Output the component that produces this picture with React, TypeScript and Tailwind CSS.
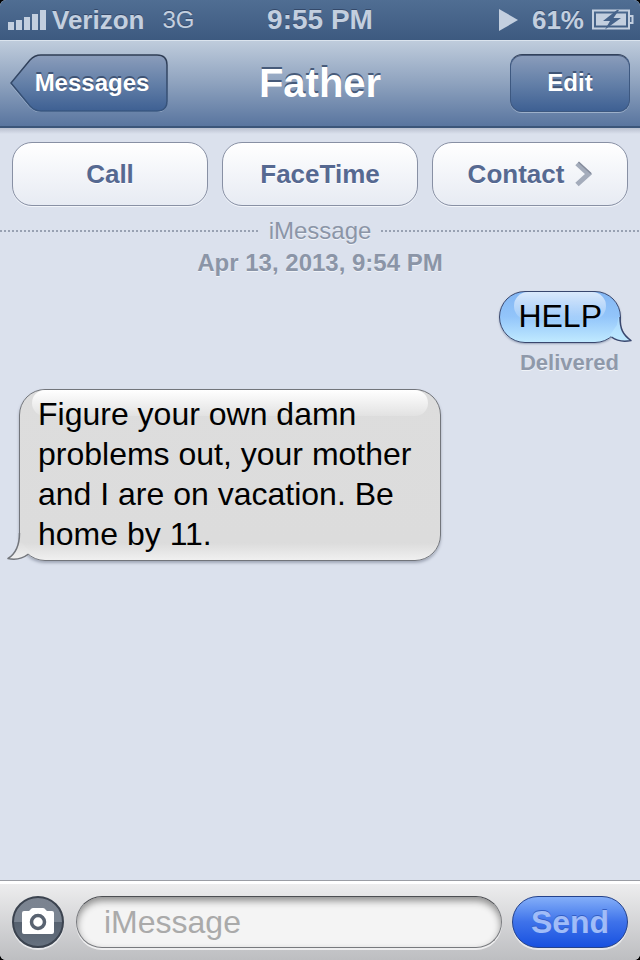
import type { ReactNode } from 'react'

interface Message {
  id: number
  text: string
  fromMe: boolean
  status?: string
}

const messages: Message[] = [
  { id: 1, text: 'HELP', fromMe: true, status: 'Delivered' },
  {
    id: 2,
    text: 'Figure your own damn problems out, your mother and I are on vacation. Be home by 11.',
    fromMe: false,
  },
]

function StatusBar() {
  return (
    <div className="grid h-10 grid-cols-[1fr_auto_1fr] items-center bg-linear-to-b from-[#506e93] to-[#3d5a80] px-2 text-[26px] leading-10 text-[#c3cfdf] [text-shadow:0_-1px_0_#34496a]">
      <div className="flex items-center gap-1.5">
        <svg width="38" height="20" viewBox="0 0 38 20" fill="currentColor" aria-hidden="true">
          <rect x="0" y="12" width="6" height="8" />
          <rect x="8" y="10" width="6" height="10" />
          <rect x="16" y="7" width="6" height="13" />
          <rect x="24" y="4" width="6" height="16" />
          <rect x="32" y="0" width="6" height="20" />
        </svg>
        <span className="font-bold">Verizon</span>
        <span className="ml-3 text-2xl leading-10">3G</span>
      </div>
      <span className="text-[28px] leading-10 font-bold">9:55 PM</span>
      <div className="flex items-center justify-end">
        <svg width="19" height="22" viewBox="0 0 19 22" fill="currentColor" className="mr-3.5" aria-hidden="true">
          <path d="M0 0L19 11L0 22Z" />
        </svg>
        <span className="mr-2 font-bold">61%</span>
        <svg width="42" height="22" viewBox="0 0 42 22" className="-mr-0.5" aria-hidden="true">
          <path d="M1 1.500H37V19.500H1Z" fill="none" stroke="currentColor" strokeWidth="2" />
          <path d="M38 7H40.500V14H38" fill="none" stroke="currentColor" strokeWidth="2" />
          <rect x="4" y="4.500" width="30" height="12" fill="currentColor" />
          <path d="M25 1L11 12H18L13 20.500L29 9H21.500L27 1Z" fill="#46638a" />
        </svg>
      </div>
    </div>
  )
}

function NavBar() {
  return (
    <header className="grid grid-cols-[1fr_auto_1fr] items-center border-t border-b-2 border-t-[#dbe4ee] border-b-[#3b5579] bg-linear-to-b from-[#bfccdc] via-[#8ea2be] to-[#59759f] px-2.5 pt-[13px] pb-3.5 font-bold text-white">
      <button type="button" className="relative h-[58px] w-[158px] justify-self-start pl-1.5 text-2xl [text-shadow:0_-2px_0_#3f5475]">
        <svg className="absolute inset-0 h-full w-full" viewBox="0 0 158 58" fill="none" aria-hidden="true">
          <defs>
            <linearGradient id="back-fill" x1="0" y1="0" x2="0" y2="1">
              <stop offset="0" stopColor="#8b9dbb" />
              <stop offset="0.5" stopColor="#6480a8" />
              <stop offset="1" stopColor="#3e6093" />
            </linearGradient>
            <linearGradient id="back-line" x1="0" y1="0" x2="0" y2="1">
              <stop offset="0" stopColor="#2f3d54" />
              <stop offset="1" stopColor="#385680" />
            </linearGradient>
          </defs>
          <path d="M1 31L20 53.500Q24.500 58 31 58H147Q157 58 157 48" stroke="#9db0ca" />
          <path
            d="M31 1H147Q157 1 157 11V47Q157 57 147 57H31Q24.500 57 20 52L1 29L20 6Q24.500 1 31 1Z"
            fill="url(#back-fill)"
            stroke="url(#back-line)"
            strokeWidth="1.500"
          />
        </svg>
        <span className="relative">Messages</span>
      </button>
      <h1 className="text-[40px] leading-[58px] [text-shadow:0_-2px_0_#475b7a]">Father</h1>
      <button
        type="button"
        className="h-[58px] w-[120px] justify-self-end rounded-xl border border-[#3d5880] border-t-[#33425b] bg-linear-to-b from-[#8b9dbb] via-[#6480a8] to-[#3e6093] text-2xl shadow-[0_1px_0_#9db0ca,inset_0_1px_0_#4a5c7c] [text-shadow:0_-2px_0_#3f5475]"
      >
        Edit
      </button>
    </header>
  )
}

function ActionButton({ children }: { children: ReactNode }) {
  return (
    <button
      type="button"
      className="flex h-16 items-center justify-center gap-[11px] rounded-[20px] border border-[#8890a4] bg-linear-to-b from-white to-[#e7ebf3] text-[26px] font-bold text-[#566991] shadow-[0_1px_0_#f2f5fa] [text-shadow:0_1px_0_#ffffff]"
    >
      {children}
    </button>
  )
}

function SentTail() {
  return (
    <svg className="absolute -right-3 -bottom-px overflow-visible" width="24" height="24" viewBox="0 0 24 24" aria-hidden="true">
      <defs>
        <linearGradient id="sent-tail" x1="0" y1="0" x2="0" y2="1">
          <stop offset="0" stopColor="#a9d8fd" />
          <stop offset="1" stopColor="#c0eaff" />
        </linearGradient>
      </defs>
      <path d="M12 -2C12 10 15 16 23 21.500C16 23.500 9 22 3.500 18L2 16L9 6L10.500 -2Z" fill="url(#sent-tail)" />
      <path d="M12 -2C12 10 15 16 23 21.500C16 23 9 22 3.500 18" fill="none" stroke="#39476e" strokeWidth="1.500" strokeLinejoin="round" />
    </svg>
  )
}

function ReceivedTail() {
  return (
    <svg className="absolute -left-3 -bottom-px overflow-visible" width="30" height="26" viewBox="0 0 30 26" aria-hidden="true">
      <defs>
        <linearGradient id="received-tail" x1="0" y1="0" x2="0" y2="1">
          <stop offset="0.3" stopColor="#dcdcdc" />
          <stop offset="1" stopColor="#f0f0f0" />
        </linearGradient>
      </defs>
      <path d="M11.500 -2C11.500 11 8 18.500 0 23.500C7 25 14 24 21 19L22 17L14 8L13 -2Z" fill="url(#received-tail)" />
      <path d="M11.500 -2C11.500 11 8 18.500 0 23.500C7 25 14 24 20.500 19" fill="none" stroke="#72757b" strokeWidth="1.500" strokeLinejoin="round" />
    </svg>
  )
}

function Bubble({ message }: { message: Message }) {
  if (message.fromMe) {
    return (
      <div className="flex flex-col items-end pr-[19px]">
        <div className="relative rounded-[26px] border border-[#39476e] bg-linear-to-b from-[#84b7f4] via-[#93c5fa] to-[#c0eaff] px-[18px] pt-1 pb-1.5 shadow-[0_1px_2px_#9aa5ba]">
          <div className="absolute inset-x-3.5 top-0 h-7 rounded-[14px] bg-linear-to-b from-white/70 to-white/10" />
          <SentTail />
          <p className="relative text-[32px] leading-10">{message.text}</p>
        </div>
        <p className="mt-2 pr-0.5 text-[22px] leading-6 font-bold text-[#8f99aa] [text-shadow:0_1px_0_#f0f3f8]">{message.status}</p>
      </div>
    )
  }

  return (
    <div className="pl-[19px]">
      <div className="relative w-fit max-w-[68%] rounded-[26px] border border-[#72757b] bg-linear-to-b from-[#dddddd] via-[#dcdcdc] via-90% to-[#f0f0f0] px-[18px] pt-1 pb-1.5 shadow-[0_2px_3px_#a0a7b6]">
        <div className="absolute inset-x-3 top-0 h-[26px] rounded-[14px] bg-linear-to-b from-white to-[#e2e2e2]" />
        <ReceivedTail />
        <p className="relative text-[32px] leading-10">{message.text}</p>
      </div>
    </div>
  )
}

function DottedLine() {
  return <div className="h-0.5 flex-1 bg-[repeating-linear-gradient(to_right,#98a1b2_0_2px,transparent_2px_4px)]" />
}

function Composer() {
  return (
    <form
      onSubmit={(e) => e.preventDefault()}
      className="flex items-center border-t border-[#9a9da4] bg-linear-to-b from-[#efeff0] to-[#bdbec1] px-3 pt-[15px] pb-3 shadow-[inset_0_3px_0_#ffffff]"
    >
      <button type="button" aria-label="Camera" className="mr-3 shrink-0 rounded-full shadow-[0_2px_0_#e8e9eb]">
        <svg width="52" height="52" viewBox="0 0 52 52" aria-hidden="true">
          <defs>
            <linearGradient id="camera-fill" x1="0" y1="0" x2="0" y2="1">
              <stop offset="0" stopColor="#7b8390" />
              <stop offset="0.500" stopColor="#7a8491" />
              <stop offset="0.510" stopColor="#56616f" />
              <stop offset="1" stopColor="#66717f" />
            </linearGradient>
          </defs>
          <circle cx="26" cy="26" r="25" fill="url(#camera-fill)" stroke="#3b434f" strokeWidth="2" />
          <path
            d="M12 15H17L19.500 12.500Q20 12 21 12H31Q32 12 32.500 12.500L35 15H40Q42 15 42 17V36Q42 38 40 38H12Q10 38 10 36V17Q10 15 12 15Z"
            fill="#ffffff"
          />
          <circle cx="26" cy="26" r="6.500" fill="none" stroke="#596371" strokeWidth="3.500" />
        </svg>
      </button>
      <input
        type="text"
        aria-label="iMessage"
        placeholder="iMessage"
        className="mr-2.5 h-[52px] min-w-0 flex-1 rounded-full border border-[#77797d] border-t-[#4c4e52] bg-[#f4f4f4] px-[27px] text-[32px] text-black shadow-[inset_0_4px_7px_#8f8f8f,0_2px_0_#eeeeef] outline-none placeholder:text-[#aaaaaa]"
      />
      <button
        type="submit"
        className="h-[52px] w-[116px] shrink-0 rounded-full border border-[#24428c] bg-linear-to-b from-[#84aef8] via-[#3e72ea] via-50% to-[#1750e0] text-[32px] font-bold text-[#a0bcf8] shadow-[0_2px_0_#e6e7ea] [text-shadow:0_-1px_0_#345fc4]"
      >
        Send
      </button>
    </form>
  )
}

export default function App() {
  return (
    <div className="min-h-screen bg-black font-['Liberation_Sans',Arial,sans-serif] text-black">
      <div className="flex min-h-screen flex-col overflow-hidden rounded-[6px] bg-[#dbe1ed]">
        <StatusBar />
        <NavBar />
        <main className="flex-1 bg-[linear-gradient(to_bottom,#b9c0cf,#dbe1ed_6px)]">
          <div className="grid grid-cols-3 gap-3.5 px-3 pt-3.5">
            <ActionButton>Call</ActionButton>
            <ActionButton>FaceTime</ActionButton>
            <ActionButton>
              Contact
              <svg width="17" height="26" viewBox="0 0 17 26" fill="none" aria-hidden="true">
                <path d="M2 2.500L13.500 13L2 23.500" stroke="#a4acbb" strokeWidth="5" />
                <path d="M3.500 1L16 12.500" stroke="#858c9c" strokeWidth="1.500" />
              </svg>
            </ActionButton>
          </div>

          <div className="mt-[9px] text-center text-2xl leading-8 text-[#8b95a7] [text-shadow:0_1px_0_#f0f3f8]">
            <div className="flex items-center gap-2.5">
              <DottedLine />
              <span>iMessage</span>
              <DottedLine />
            </div>
            <p className="font-bold">Apr 13, 2013, 9:54 PM</p>
          </div>

          <div className="mt-3 mb-6 flex flex-col gap-3.5">
            {messages.map((message) => (
              <Bubble key={message.id} message={message} />
            ))}
          </div>
        </main>
        <Composer />
      </div>
    </div>
  )
}
